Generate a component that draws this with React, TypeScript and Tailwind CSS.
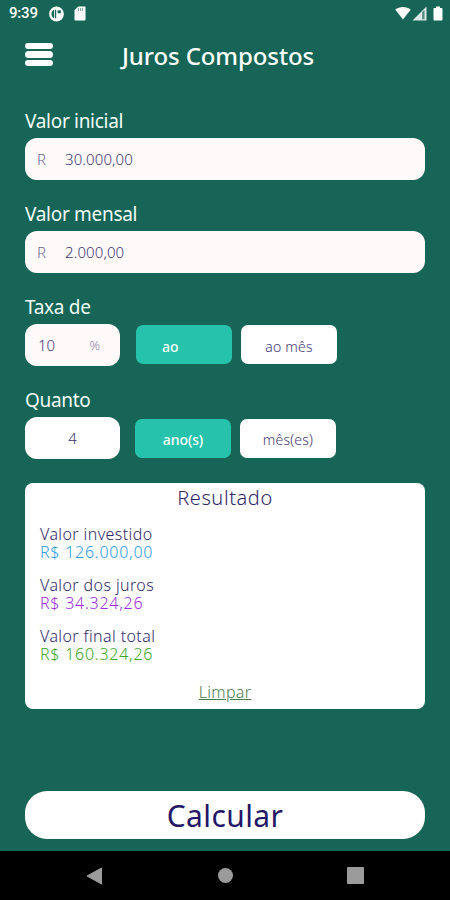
import type { ReactNode } from "react";
import { clsx } from "clsx";

interface MoneyFieldProps {
  label: string;
  value: string;
}

function StatusBar() {
  return (
    <div className="flex h-[27px] shrink-0 items-center justify-between pl-[9px] pr-[7px]">
      <div className="flex items-center">
        <span className="w-[29px] font-['Roboto'] text-[15px] leading-none font-medium tracking-[-0.2px] text-white">9:39</span>
        <svg className="ml-[11px]" width="15" height="16" viewBox="0 0 15 16">
          <circle cx="7.5" cy="8" r="7.4" fill="#fff" />
          <path d="M5.2 3.6C3.2 4.6 2.3 6.3 2.5 8.4c.2 1.700 1.200 3.100 2.700 3.800z" fill="#166556" />
          <path d="M6.600 3.800v8.400" stroke="#166556" strokeWidth="1.200" />
          <path d="M8.600 4.300h3.200v3h-3.200z" fill="#166556" />
        </svg>
        <svg className="ml-[10px]" width="12" height="15" viewBox="0 0 12 15">
          <path d="M4.2.5h6.3c.6 0 1 .4 1 1v12c0 .6-.4 1-1 1h-9c-.6 0-1-.4-1-1V4.2z" fill="#fff" />
          <path d="M4.5 2v3M6.5 2v3M8.5 2v3" stroke="#166556" strokeWidth="0.9" opacity="0.6" />
        </svg>
      </div>
      <div className="mb-px flex items-center">
        <svg width="16" height="14" viewBox="0 0 16 14">
          <path d="M8 13.5 0.2 3.6C4.6 0.1 11.4 0.1 15.8 3.6z" fill="#fff" />
        </svg>
        <svg className="ml-px" width="15" height="15" viewBox="0 0 15 15">
          <path d="M14.5 0.5v14H0.5z" fill="#fff" opacity="0.85" />
          <path d="M10.2 6v7.2h2.3V4z" fill="#166556" opacity="0.7" />
        </svg>
        <svg className="ml-[6px]" width="10" height="15" viewBox="0 0 10 15">
          <path d="M3 .5h4V2h1.5c.5 0 1 .4 1 1v10.5c0 .5-.5 1-1 1h-7c-.5 0-1-.5-1-1V3c0-.6.5-1 1-1H3z" fill="#fff" />
        </svg>
      </div>
    </div>
  );
}

function Label({ children }: { children: ReactNode }) {
  return (
    <div className="h-7 pt-px text-[19px] leading-5 tracking-[-0.3px] whitespace-nowrap text-[#f3fbf8]">{children}</div>
  );
}

function MoneyField({ label, value }: MoneyFieldProps) {
  return (
    <div className="h-[93.2px]">
      <Label>{label}</Label>
      <div className="flex h-[42px] items-center rounded-[12px] bg-[#fffafa] pt-px pl-3 text-[15px] font-light text-[#3f3776]">
        <span className="w-7 text-[#6d6794]">R</span>
        <span className="tracking-[0.1px]">{value}</span>
      </div>
    </div>
  );
}

function Toggle({ children, active, className }: { children: ReactNode; active?: boolean; className?: string }) {
  return (
    <button
      className={clsx(
        "flex h-[39px] w-24 shrink-0 items-center rounded-[7px] pt-[3px] text-[14px] whitespace-nowrap",
        active ? "bg-[#26c2ac] font-medium tracking-[-0.1px] text-white" : "bg-white font-light tracking-[0.2px] text-[#3f3776]",
        className
      )}
    >
      {children}
    </button>
  );
}

function ResultRow({ label, value, color }: { label: string; value: string; color: string }) {
  return (
    <div className="h-[51.2px] text-[16px] leading-[18px] font-light">
      <div className="tracking-[0.4px] text-[#322b69]">{label}</div>
      <div className={clsx("tracking-[0.75px]", color)}>{value}</div>
    </div>
  );
}

export default function App() {
  return (
    <div className="flex h-[900px] w-[450px] flex-col overflow-hidden bg-[#166556] font-['Noto_Sans',sans-serif]">
      <StatusBar />

      {/* Header */}
      <div className="flex h-[82.5px] shrink-0 items-start pl-[25px]">
        <button className="mt-4 flex w-7 flex-col gap-[2px]">
          <span className="h-[6.4px] w-full rounded-full bg-white" />
          <span className="h-[6.4px] w-full rounded-full bg-white" />
          <span className="h-[6.4px] w-full rounded-full bg-white" />
        </button>
        <h1 className="mt-[13px] ml-[69px] text-[24px] leading-8 font-medium tracking-[-0.1px] whitespace-nowrap text-white">
          Juros Compostos
        </h1>
      </div>

      {/* Form */}
      <div className="shrink-0 px-[25px]">
        <MoneyField label="Valor inicial" value="30.000,00" />
        <MoneyField label="Valor mensal" value="2.000,00" />

        <div className="h-[93.2px]">
          <Label>Taxa de</Label>
          <div className="flex items-center">
            <div className="flex h-[42px] w-[95px] items-center justify-between rounded-[12px] bg-[#fffafa] pt-px pr-5 pl-[13px] text-[15px] font-light text-[#3f3776]">
              <span>10</span>
              <span className="text-[13px] text-[#8882a2]">%</span>
            </div>
            <Toggle active className="ml-4 pl-[26px]">ao</Toggle>
            <Toggle className="ml-[9px] justify-center">ao mês</Toggle>
          </div>
        </div>

        <div className="h-[94px]">
          <Label>Quanto</Label>
          <div className="flex items-center">
            <div className="flex h-[42px] w-[95px] items-center justify-center rounded-[12px] bg-white text-[15px] font-light text-[#3f3776]">4</div>
            <Toggle active className="ml-[15px] justify-center">ano(s)</Toggle>
            <Toggle className="ml-[9px] justify-center">mês(es)</Toggle>
          </div>
        </div>
      </div>

      {/* Result */}
      <div className="mx-[25px] flex h-[226px] shrink-0 flex-col rounded-[8px] bg-white px-[15px]">
        <h2 className="h-[42px] pt-[2px] text-center text-[20px] leading-[26px] font-light tracking-[0.6px] text-[#2f2868]">Resultado</h2>
        <ResultRow label="Valor investido" value="R$ 126.000,00" color="text-[#2f9ce6]" />
        <ResultRow label="Valor dos juros" value="R$ 34.324,26" color="text-[#9c2ee0]" />
        <ResultRow label="Valor final total" value="R$ 160.324,26" color="text-[#3ca629]" />
        <button className="mt-[3px] text-center text-[16px] leading-5 font-light tracking-[0.3px] text-[#4c7a50] underline">Limpar</button>
      </div>

      <button className="mx-[25px] mt-auto mb-[12.5px] h-[47.5px] shrink-0 rounded-[22px] bg-white pt-[2px] text-[30px] leading-none tracking-[0.4px] text-[#251765]">
        Calcular
      </button>

      {/* Android navigation */}
      <div className="flex h-[49px] shrink-0 items-center justify-between bg-black px-[86px]">
        <svg width="17" height="18" viewBox="0 0 17 18">
          <path d="M15.5 1v16L1 9z" fill="#9b9b9b" stroke="#9b9b9b" strokeWidth="1" strokeLinejoin="round" />
        </svg>
        <span className="size-[15px] rounded-full bg-[#9b9b9b]" />
        <span className="size-[17px] rounded-[1px] bg-[#9b9b9b]" />
      </div>
    </div>
  );
}
